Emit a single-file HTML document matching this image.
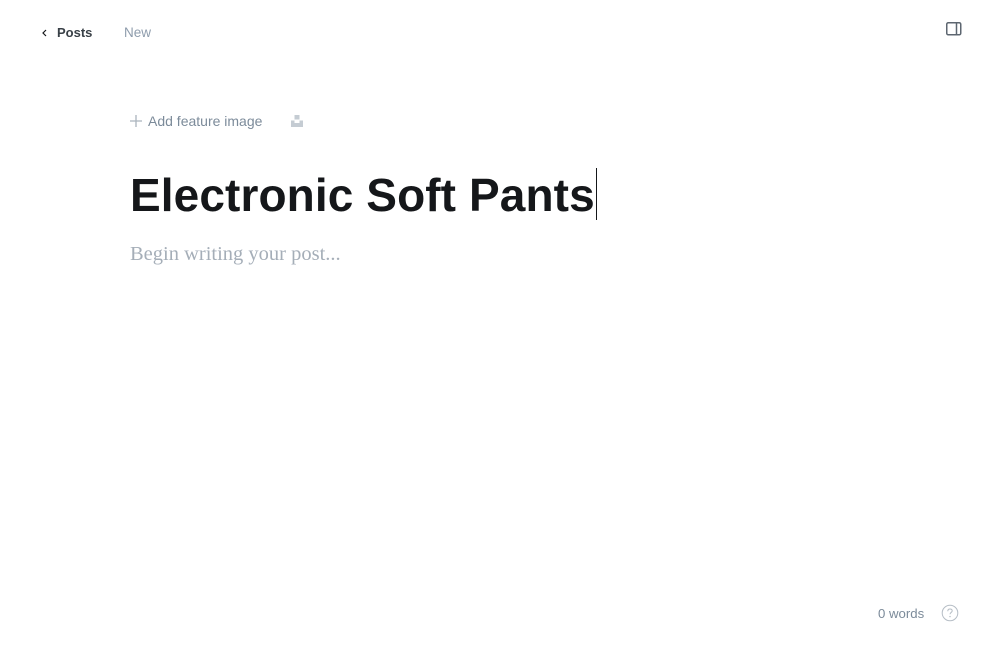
<!DOCTYPE html>
<html><head><meta charset="utf-8"><style>
html,body{margin:0;padding:0;background:#fff;width:1000px;height:660px;overflow:hidden;font-family:"Liberation Sans",sans-serif;}
.a{position:absolute;white-space:nowrap}
</style></head><body>
<svg class="a" style="left:40px;top:27px" width="10" height="12" viewBox="0 0 10 12"><path d="M6 3 L3 6 L6 9" fill="none" stroke="#15171a" stroke-width="1.2"/></svg>
<div class="a" style="left:57px;top:25px;font-size:13px;font-weight:bold;color:#394047">Posts</div>
<div class="a" style="left:124px;top:25px;font-size:13.5px;color:#8e9cac">New</div>
<svg class="a" style="left:945px;top:21px" width="18" height="16" viewBox="0 0 18 16"><rect x="1.75" y="1.75" width="14" height="12" rx="1.5" fill="none" stroke="#5d6670" stroke-width="1.5"/><line x1="11.5" y1="2" x2="11.5" y2="14" stroke="#5d6670" stroke-width="1.5"/></svg>
<svg class="a" style="left:129px;top:114px" width="14" height="14" viewBox="0 0 14 14"><path d="M7 1V13M1 7H13" stroke="#abb4be" stroke-width="1.3"/></svg>
<div class="a" style="left:148px;top:113px;font-size:14px;color:#7c8b9a">Add feature image</div>
<svg class="a" style="left:290px;top:114px" width="14" height="14" viewBox="0 0 14 14"><rect x="4.5" y="1" width="5" height="4.5" fill="#c5ccd3"/><path d="M1 6.5H4.5V9H9.5V6.5H13V13H1Z" fill="#c5ccd3"/></svg>
<div class="a" style="left:130px;top:165px;font-size:46px;font-weight:bold;color:#15171a;line-height:60px;letter-spacing:0.1px">Electronic Soft Pants</div>
<div class="a" style="left:596px;top:168px;width:1px;height:52px;background:#15171a"></div>
<div class="a" style="left:130px;top:243px;font-family:'Liberation Serif',serif;font-size:20.5px;color:#a5aeb8">Begin writing your post...</div>
<div class="a" style="left:878px;top:606px;font-size:13.2px;color:#7c8b9a">0 words</div>
<svg class="a" style="left:941px;top:604px" width="18" height="18" viewBox="0 0 18 18"><circle cx="9" cy="9" r="7.8" fill="none" stroke="#b5bdc5" stroke-width="1"/><path d="M6.8 7.2C6.8 5.8 7.8 5 9 5C10.3 5 11.2 5.8 11.2 6.9C11.2 8.4 9 8.5 9 10.3" fill="none" stroke="#b5bdc5" stroke-width="1"/><circle cx="9" cy="12.6" r="0.7" fill="#b5bdc5"/></svg>
</body></html>
